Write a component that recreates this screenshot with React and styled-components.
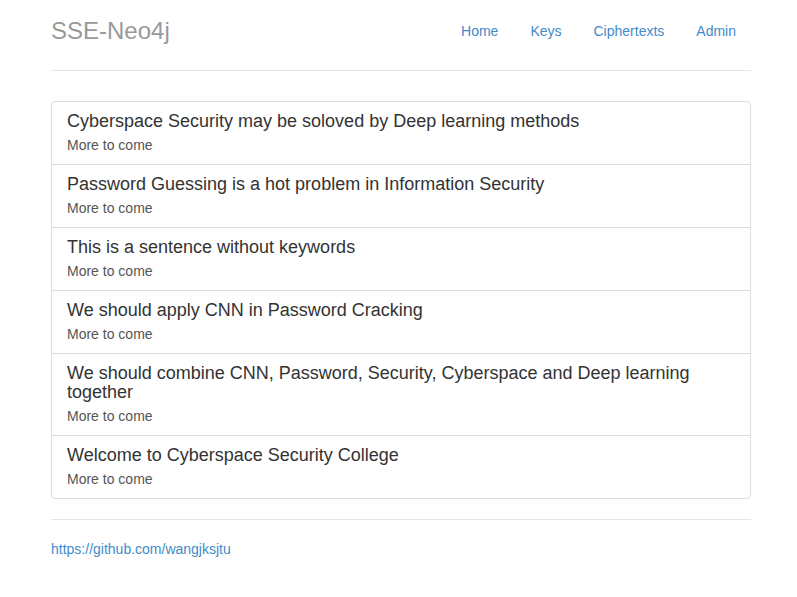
import React from 'react';
import styled, { createGlobalStyle } from 'styled-components';

const GlobalStyle = createGlobalStyle`
    html, body {
        margin: 0;
        padding: 0;
        background: #fff;
    }

    body {
        font-family: "Liberation Sans", Arial, Helvetica, sans-serif;
        font-size: 14px;
        line-height: 1.42857143;
        color: #333;
    }

    * {
        box-sizing: border-box;
    }
`;

const Container = styled.div`
    width: 700px;
    margin-left: 51px;
    padding-top: 11px;
`;

const Header = styled.header`
    display: flex;
    align-items: center;
    justify-content: space-between;
    padding-bottom: 19px;
    border-bottom: 1px solid #e5e5e5;
`;

const Brand = styled.h3`
    margin: 0;
    font-size: 24px;
    font-weight: 500;
    line-height: 40px;
    color: #999;
`;

const Nav = styled.ul`
    display: flex;
    gap: 2px;
    margin: 0;
    padding: 0;
    list-style: none;
`;

const NavLink = styled.a`
    display: block;
    padding: 10px 15px;
    border-radius: 4px;
    color: #428bca;
    text-decoration: none;
    line-height: 20px;
`;

const ListGroup = styled.div`
    display: flex;
    flex-direction: column;
    margin: 30px 0 20px;
`;

const ListItem = styled.div`
    padding: 10px 15px;
    margin-bottom: -1px;
    border: 1px solid #ddd;
    background: #fff;

    &:first-child {
        border-top-left-radius: 4px;
        border-top-right-radius: 4px;
    }

    &:last-child {
        margin-bottom: 0;
        border-bottom-left-radius: 4px;
        border-bottom-right-radius: 4px;
    }
`;

const ItemHeading = styled.h4`
    margin: 0 0 5px;
    font-size: 18px;
    font-weight: 500;
    line-height: 19px;
    color: #333;
`;

const ItemText = styled.p`
    margin: 0;
    line-height: 18px;
    color: #555;
`;

const Footer = styled.footer`
    padding-top: 19px;
    border-top: 1px solid #e5e5e5;
`;

const FooterLink = styled.a`
    display: block;
    margin: 0 0 10px;
    color: #428bca;
    text-decoration: none;
    line-height: 20px;
`;

const navItems = ['Home', 'Keys', 'Ciphertexts', 'Admin'];

const sentences = [
    'Cyberspace Security may be soloved by Deep learning methods',
    'Password Guessing is a hot problem in Information Security',
    'This is a sentence without keywords',
    'We should apply CNN in Password Cracking',
    'We should combine CNN, Password, Security, Cyberspace and Deep learning together',
    'Welcome to Cyberspace Security College',
];

function App() {
    return (
        <>
            <GlobalStyle />
            <Container>
                <Header>
                    <Brand>SSE-Neo4j</Brand>
                    <Nav>
                        {navItems.map((item) => (
                            <li key={item}>
                                <NavLink href="#">{item}</NavLink>
                            </li>
                        ))}
                    </Nav>
                </Header>
                <ListGroup>
                    {sentences.map((s) => (
                        <ListItem key={s}>
                            <ItemHeading>{s}</ItemHeading>
                            <ItemText>More to come</ItemText>
                        </ListItem>
                    ))}
                </ListGroup>
                <Footer>
                    <FooterLink href="#">https://github.com/wangjksjtu</FooterLink>
                </Footer>
            </Container>
        </>
    );
}

export default App;
